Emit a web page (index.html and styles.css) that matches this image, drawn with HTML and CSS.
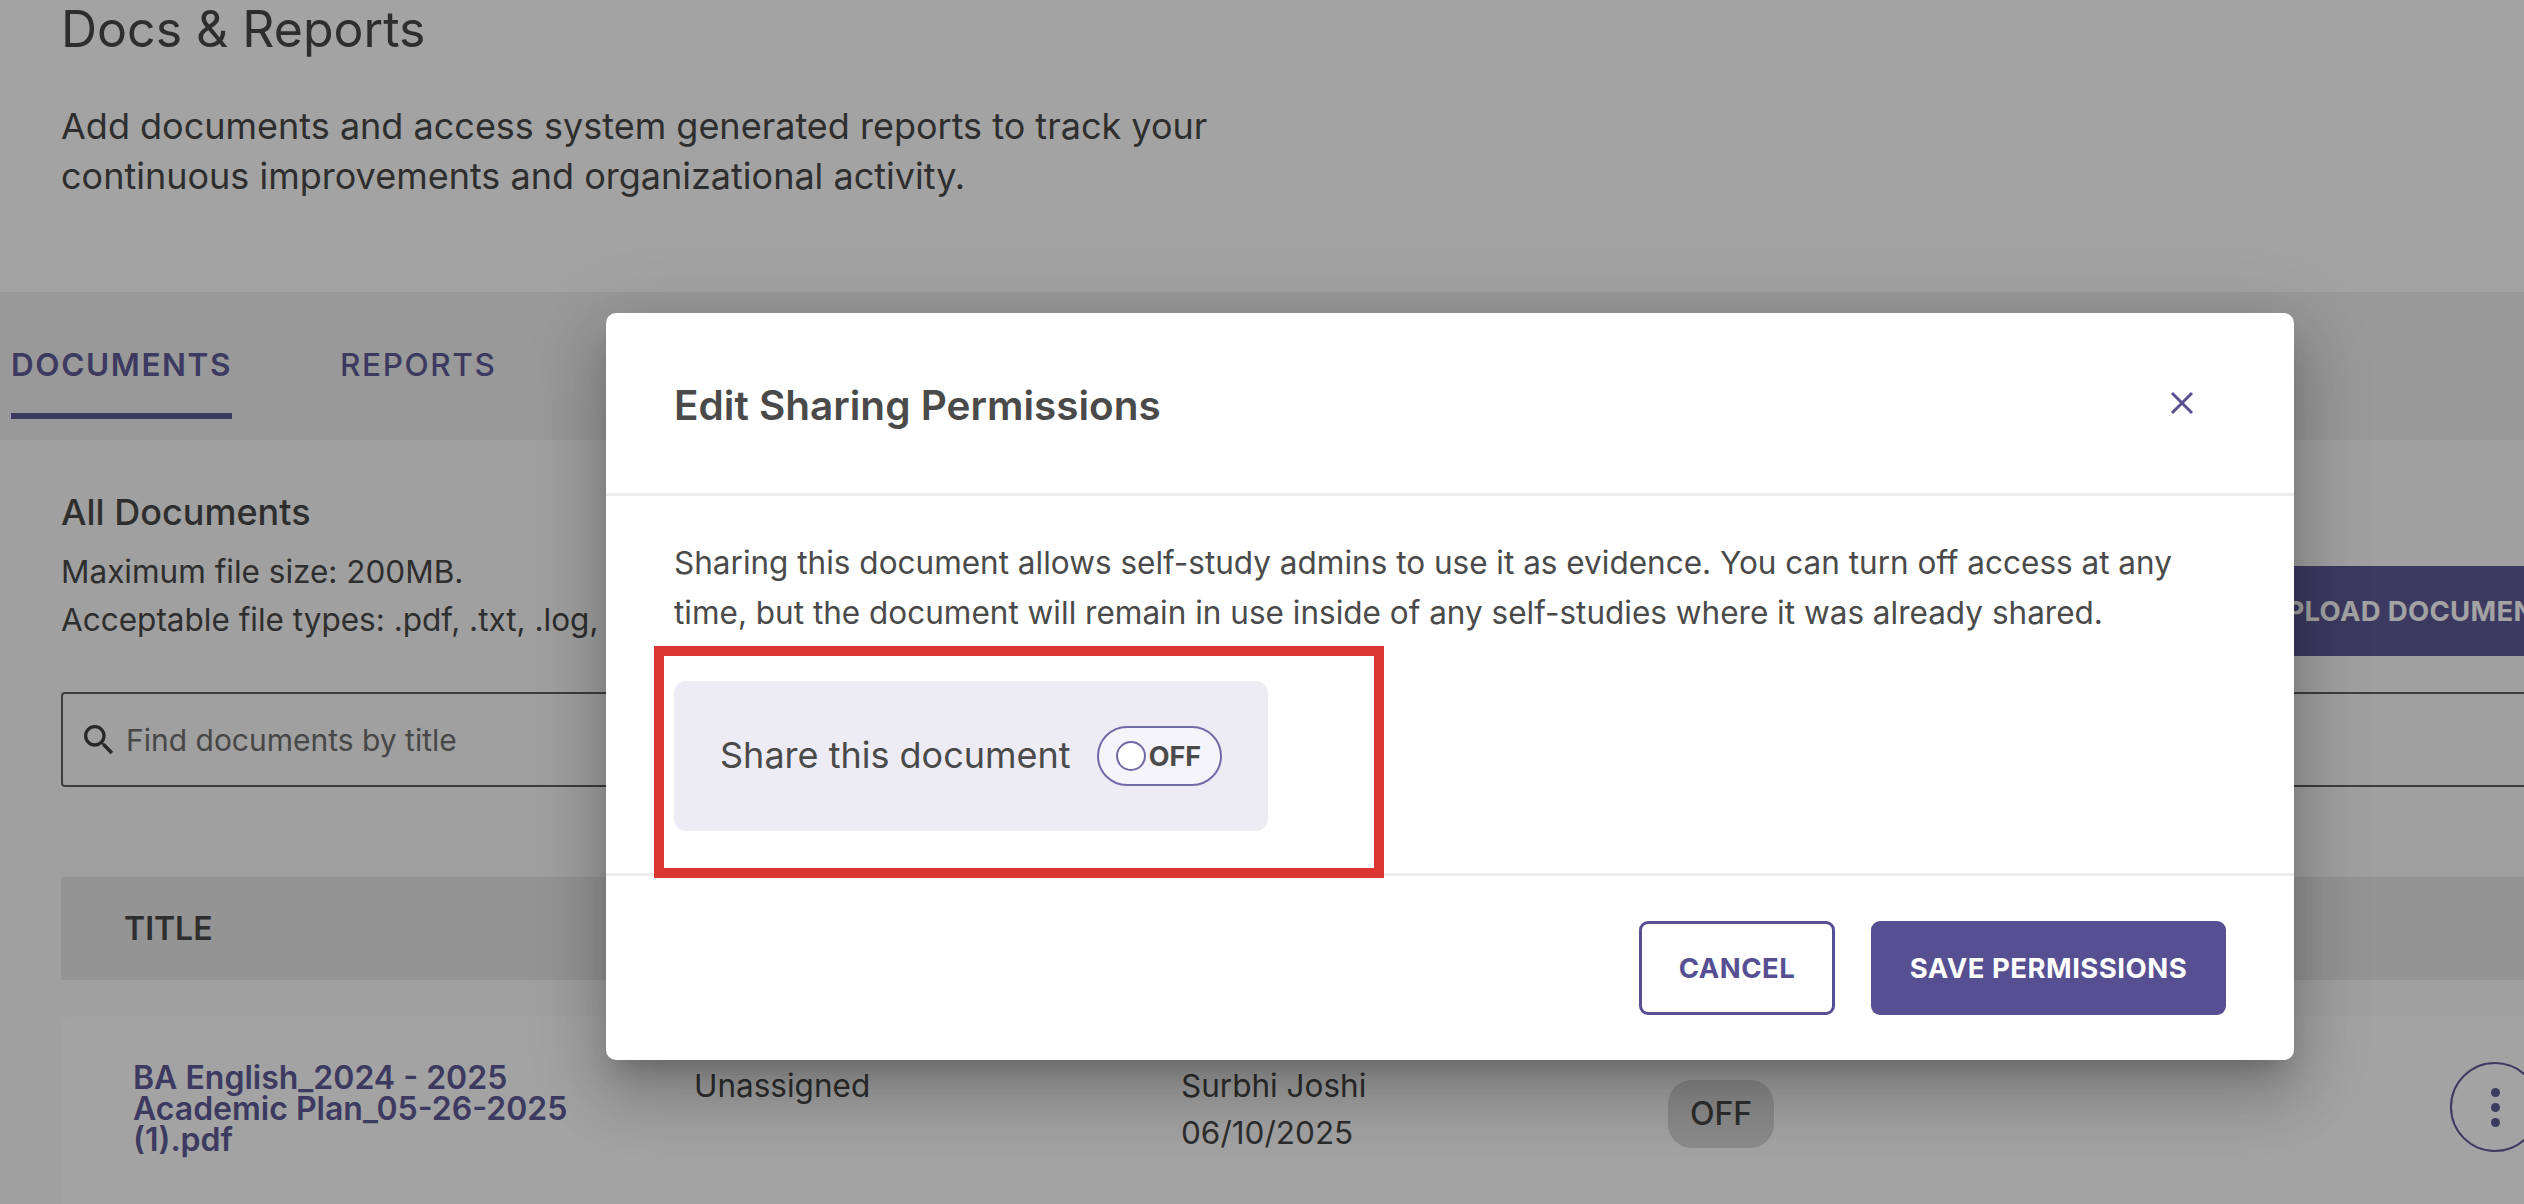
FILE: index.html
```html
<!DOCTYPE html>
<html lang="en">
<head>
<meta charset="utf-8">
<title>Docs &amp; Reports</title>
<link rel="stylesheet" href="styles.css">
</head>
<body>
<main class="page">
  <header class="intro">
    <h1 class="intro-title">Docs &amp; Reports</h1>
    <p class="intro-text">Add documents and access system generated reports to track your<br>continuous improvements and organizational activity.</p>
  </header>
  <nav class="tabs">
    <span class="tab tab-active">DOCUMENTS</span>
    <span class="tab">REPORTS</span>
  </nav>
  <section class="content">
    <div class="docs-head">
      <div>
        <h2 class="docs-title">All Documents</h2>
        <p class="docs-note">Maximum file size: 200MB.</p>
        <p class="docs-note">Acceptable file types: .pdf, .txt, .log,</p>
      </div>
      <span class="upload">UPLOAD DOCUMENT</span>
    </div>
    <div class="search">
      <svg class="search-icon" viewBox="0 0 24 24" aria-hidden="true"><path d="M15.5 14h-.79l-.28-.27A6.47 6.47 0 0 0 16 9.5 6.5 6.5 0 1 0 9.5 16c1.61 0 3.09-.59 4.23-1.57l.27.28v.79l5 4.99L20.49 19l-4.99-5zm-6 0C7.01 14 5 11.99 5 9.5S7.01 5 9.5 5 14 7.01 14 9.5 11.99 14 9.5 14z"/></svg>
      <span class="search-text">Find documents by title</span>
    </div>
    <div class="table-head"><span>TITLE</span></div>
    <div class="row">
      <a class="doc-name">BA English_2024 - 2025<br>Academic Plan_05-26-2025<br>(1).pdf</a>
      <span class="cell">Unassigned</span>
      <span class="cell cell-stack"><span>Surbhi Joshi</span><span>06/10/2025</span></span>
      <span class="cell-status"><span class="pill">OFF</span></span>
      <span class="kebab"><i></i><i></i><i></i></span>
    </div>
  </section>
</main>

<div class="backdrop"></div>

<div class="modal">
  <div class="modal-head">
    <h2 class="modal-title">Edit Sharing Permissions</h2>
    <svg class="close" viewBox="0 0 24 24" aria-hidden="true"><path d="M2 2 22 22M22 2 2 22"/></svg>
  </div>
  <div class="modal-body">
    <p class="modal-text">Sharing this document allows self-study admins to use it as evidence. You can turn off access at any<br>time, but the document will remain in use inside of any self-studies where it was already shared.</p>
    <div class="share">
      <span class="share-label">Share this document</span>
      <span class="toggle"><span class="knob"></span><span class="toggle-text">OFF</span></span>
    </div>
  </div>
  <div class="modal-foot">
    <button class="btn btn-outline">CANCEL</button>
    <button class="btn btn-solid">SAVE PERMISSIONS</button>
  </div>
  <div class="callout"></div>
</div>
</body>
</html>
```
FILE: styles.css
```css
* { box-sizing: border-box; }
html, body { margin: 0; padding: 0; width: 2524px; height: 1204px; overflow: hidden; }
body { font-family: Inter, "Liberation Sans", sans-serif; color: #3c3c3c; background: #fff; position: relative; }
h1, h2, p { margin: 0; font-weight: 400; }

.page { width: 2760px; }

.intro { height: 292px; padding: 0 0 0 61px; background: #fff; }
.intro-title { font-size: 50px; line-height: 58px; }
.intro-text { font-size: 36px; line-height: 50px; margin-top: 43px; }

.tabs { height: 148px; background: #eee; display: flex; gap: 108px; padding: 0 0 0 11px; }
.tab { height: 127px; padding-top: 55px; font-size: 31.5px; line-height: 36px; font-weight: 500; letter-spacing: 1.6px; color: #565092; }
.tab-active { font-weight: 600; border-bottom: 6px solid #565092; }

.content { background: #fafafa; padding: 50px 0 60px 61px; height: 800px; }
.docs-head { display: flex; justify-content: space-between; align-items: flex-start; height: 202px; }
.docs-title { font-size: 36px; line-height: 44px; font-weight: 500; }
.docs-note { font-size: 31.5px; line-height: 48px; }
.docs-note:first-of-type { margin-top: 14px; }
.upload { display: block; width: 560px; height: 90px; margin-top: 76px; padding-left: 66px; line-height: 90px; white-space: nowrap; font-size: 27.5px; font-weight: 700; color: #fff; background: #565092; border-radius: 6px; letter-spacing: .3px; }

.search { display: flex; align-items: center; height: 95px; border: 2px solid #555; border-radius: 4px; padding-left: 16px; background: #fafafa; }
.search-icon { width: 40px; height: 40px; fill: #333; }
.search-text { font-size: 30px; color: #666; margin-left: 7px; }

.table-head { height: 103px; margin-top: 90px; background: #e6e6e8; display: flex; align-items: center; padding-left: 63px; font-size: 32px; font-weight: 600; }

.row { display: grid; grid-template-columns: 561px 487px 487px 782px 90px; height: 200px; margin-top: 36px; padding: 46px 0 0 72px; background: #fff; border-radius: 10px; }
.doc-name { font-size: 32px; line-height: 31px; font-weight: 600; color: #565092; }
.cell { font-size: 31.5px; line-height: 47px; }
.cell-stack { display: flex; flex-direction: column; }
.cell-status { margin-top: 18px; }
.pill { display: inline-block; width: 106px; height: 68px; line-height: 68px; text-align: center; border-radius: 24px; background: #d7d7d7; font-size: 32px; font-weight: 500; }
.kebab { width: 90px; height: 90px; border: 2px solid #565092; border-radius: 50%; display: flex; flex-direction: column; align-items: center; justify-content: center; gap: 6px; }
.kebab i { width: 9px; height: 9px; border-radius: 50%; background: #565092; }

.backdrop { position: absolute; inset: 0; background: rgba(25, 25, 25, .4); }

.modal { position: absolute; left: 606px; top: 313px; width: 1688px; height: 747px; background: #fff; border-radius: 10px; box-shadow: 0 18px 24px -11px rgba(0,0,0,.2), 0 38px 61px 5px rgba(0,0,0,.14), 0 14px 74px 13px rgba(0,0,0,.12); display: flex; flex-direction: column; color: #4a4a4a; }
.modal-head { height: 183px; padding: 0 100px 0 68px; display: flex; align-items: center; justify-content: space-between; border-bottom: 3px solid #ececec; }
.modal-title { font-size: 40.5px; font-weight: 600; margin-top: 4px; }
.close { width: 24px; height: 24px; fill: none; stroke: #565092; stroke-width: 3; }
.modal-body { height: 380px; padding: 42px 68px 0; border-bottom: 3px solid #ececec; }
.modal-text { font-size: 31.5px; line-height: 50px; white-space: nowrap; }
.share { display: flex; align-items: center; width: 594px; height: 150px; margin-top: 43px; padding-left: 46px; background: #edecf5; border-radius: 12px; }
.share-label { font-size: 36px; line-height: 40px; margin-bottom: 3px; }
.toggle { display: flex; align-items: center; width: 125px; height: 60px; margin-left: 26px; padding-left: 17px; border: 2px solid #6f69a6; border-radius: 30px; background: #f5f4fa; }
.knob { width: 30px; height: 30px; border: 2px solid #6f69a6; border-radius: 50%; background: #fff; flex: none; }
.toggle-text { font-size: 27px; font-weight: 700; margin-left: 3px; }
.modal-foot { flex: 1; display: flex; justify-content: flex-end; align-items: flex-start; gap: 36px; padding: 45px 68px 0 0; }
.btn { height: 94px; border-radius: 9px; font-family: inherit; font-size: 27.5px; font-weight: 700; letter-spacing: .5px; padding: 0; }
.btn-outline { width: 196px; background: #fff; border: 3px solid #565092; color: #565092; }
.btn-solid { width: 355px; background: #565092; border: 0; color: #fff; }

.callout { position: absolute; left: 48px; top: 333px; width: 730px; height: 232px; border: 10px solid #dc3632; }
```
